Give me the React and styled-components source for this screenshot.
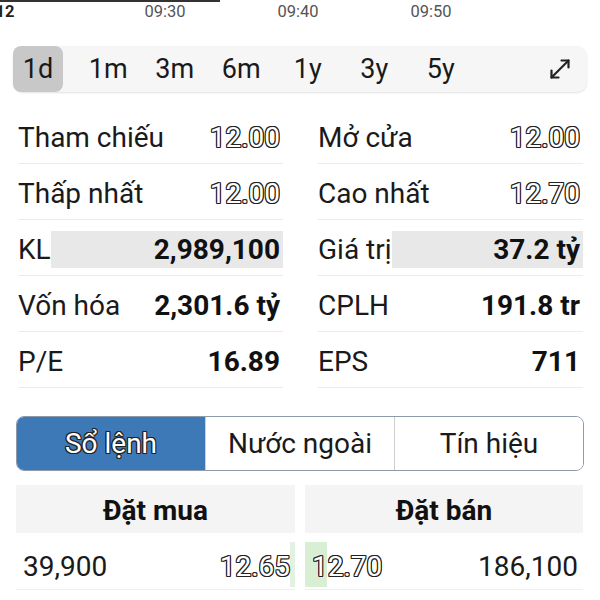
import React from 'react';
import styled, { createGlobalStyle, css } from 'styled-components';

const Global = createGlobalStyle`
  html, body { margin: 0; padding: 0; background: #fff; }
  body {
    font-family: Roboto, "Noto Sans", "Liberation Sans", sans-serif;
    color: #1a1a1a;
    width: 600px;
    height: 600px;
    overflow: hidden;
  }
`;

const outline = css`
  color: #fff;
  text-shadow:
    -1px -1px 0 #222, 1px -1px 0 #222, -1px 1px 0 #222, 1px 1px 0 #222,
    0 -1px 0 #222, 0 1px 0 #222, -1px 0 0 #222, 1px 0 0 #222;
`;

const Page = styled.div`
  width: 600px;
  height: 600px;
  overflow: hidden;
  display: flex;
  flex-direction: column;
`;

const Axis = styled.div`
  position: relative;
  height: 28px;
  flex: none;
  overflow: hidden;
`;

const AxisLine = styled.div`
  position: absolute;
  left: 0;
  top: 0;
  width: 220px;
  height: 2px;
  background: #333;
`;

const Tick = styled.span`
  position: absolute;
  top: 3px;
  left: ${p => p.$x}px;
  transform: translateX(-50%);
  font-size: 16.5px;
  line-height: 18px;
  color: ${p => (p.$bold ? '#222' : '#555')};
  font-weight: ${p => (p.$bold ? 700 : 400)};
`;

const Toolbar = styled.div`
  margin: 18px 13px 0;
  height: 46px;
  flex: none;
  display: flex;
  align-items: stretch;
  background: #f6f6f6;
  border-radius: 10px;
  box-shadow: 0 1px 2px rgba(0, 0, 0, 0.12);
`;

const RangeBtn = styled.button`
  all: unset;
  display: flex;
  align-items: center;
  justify-content: center;
  width: ${p => (p.$active ? '50px' : '66.5px')};
  margin-right: ${p => (p.$active ? '12px' : '0')};
  border-radius: 8px;
  background: ${p => (p.$active ? '#c8c8c8' : 'transparent')};
  font-size: 27px;
  color: #1a1a1a;
`;

const ExpandBtn = styled.button`
  all: unset;
  margin-left: auto;
  margin-right: 15px;
  display: flex;
  align-items: center;
  color: #222;
`;

const Stats = styled.div`
  margin: 16px 17px 0 18px;
  display: grid;
  grid-template-columns: 265px 265px;
  column-gap: 35px;
  flex: none;
`;

const StatRow = styled.div`
  height: 56px;
  box-sizing: border-box;
  padding-top: 3px;
  border-bottom: 1px solid #ececec;
  display: flex;
  align-items: center;
`;

const StatLabel = styled.span`
  font-size: 28px;
  white-space: nowrap;
  color: #1a1a1a;
`;

const StatValue = styled.span`
  flex: 1;
  height: 37px;
  display: flex;
  align-items: center;
  justify-content: flex-end;
  padding-right: 3px;
  font-size: 28px;
  white-space: nowrap;
  background: ${p => (p.$hl ? '#e8e8e8' : 'transparent')};
  font-weight: ${p => (p.$outline ? 400 : 700)};
  color: #111;
  ${p => p.$outline && outline}
`;

const Tabs = styled.div`
  margin: 28px 16px 0;
  height: 55px;
  box-sizing: border-box;
  display: flex;
  border: 1.5px solid #8d9bab;
  border-radius: 8px;
  overflow: hidden;
  flex: none;
`;

const Tab = styled.div`
  flex: 1;
  display: flex;
  align-items: center;
  justify-content: center;
  font-size: 28px;
  background: ${p => (p.$active ? '#3d79b6' : '#fff')};
  color: #1a1a1a;
  & + & { border-left: 1px solid #cfcfcf; }
  ${p => p.$active && outline}
`;

const Book = styled.div`
  margin: 14px 17px 0 16px;
  display: grid;
  grid-template-columns: 279px 278px;
  column-gap: 10px;
  flex: none;
`;

const BookSide = styled.div`
  display: flex;
  flex-direction: column;
`;

const BookHeader = styled.div`
  height: 48px;
  box-sizing: border-box;
  padding-top: 3px;
  background: #f4f4f4;
  display: flex;
  align-items: center;
  justify-content: center;
  font-weight: 700;
  font-size: 28px;
  color: #111;
  margin-bottom: 9px;
`;

const BookRow = styled.div`
  position: relative;
  height: 45px;
  border-bottom: 1px solid #eeeeee;
  display: flex;
  align-items: center;
  justify-content: space-between;
  padding: 2px 5px 0 7px;
`;

const Bar = styled.div`
  position: absolute;
  top: 0;
  bottom: 2px;
  ${p => (p.$side === 'buy' ? 'right: 0;' : 'left: 0;')}
  background: ${p => (p.$side === 'buy' ? '#e3f1e0' : '#d8efd3')};
`;

const Qty = styled.span`
  position: relative;
  font-size: 28px;
  color: #1a1a1a;
`;

const Price = styled.span`
  position: relative;
  font-size: 28px;
  ${outline}
`;

const ExpandIcon = () => (
  <svg width="24" height="24" viewBox="0 0 24 24" fill="none" stroke="currentColor" strokeWidth="2.2" strokeLinecap="round" strokeLinejoin="round">
    <path d="M3.5 20.5 L20.5 3.5" />
    <path d="M13.5 3.5 H20.5 V10.5" />
    <path d="M3.5 13.5 V20.5 H10.5" />
  </svg>
);

const ranges = ['1d', '1m', '3m', '6m', '1y', '3y', '5y'];

const stats = [
  ['Tham chiếu', '12.00', { outline: true }],
  ['Mở cửa', '12.00', { outline: true }],
  ['Thấp nhất', '12.00', { outline: true }],
  ['Cao nhất', '12.70', { outline: true }],
  ['KL', '2,989,100', { hl: true }],
  ['Giá trị', '37.2 tỷ', { hl: true }],
  ['Vốn hóa', '2,301.6 tỷ', {}],
  ['CPLH', '191.8 tr', {}],
  ['P/E', '16.89', {}],
  ['EPS', '711', {}],
];

const buys = [{ qty: '39,900', price: '12.65', bar: 5 }];
const sells = [{ qty: '186,100', price: '12.70', bar: 22 }];

export default function App() {
  return (
    <>
      <Global />
      <Page>
        <Axis>
          <AxisLine />
          <Tick $x={5} $bold>12</Tick>
          <Tick $x={165}>09:30</Tick>
          <Tick $x={298}>09:40</Tick>
          <Tick $x={431}>09:50</Tick>
        </Axis>

        <Toolbar>
          {ranges.map((r, i) => (
            <RangeBtn key={r} $active={i === 0}>{r}</RangeBtn>
          ))}
          <ExpandBtn aria-label="expand"><ExpandIcon /></ExpandBtn>
        </Toolbar>

        <Stats>
          {stats.map(([label, value, o]) => (
            <StatRow key={label}>
              <StatLabel>{label}</StatLabel>
              <StatValue $hl={o.hl} $outline={o.outline}>{value}</StatValue>
            </StatRow>
          ))}
        </Stats>

        <Tabs>
          <Tab $active>Sổ lệnh</Tab>
          <Tab>Nước ngoài</Tab>
          <Tab>Tín hiệu</Tab>
        </Tabs>

        <Book>
          <BookSide>
            <BookHeader>Đặt mua</BookHeader>
            {buys.map(b => (
              <BookRow key={b.price}>
                <Bar $side="buy" style={{ width: b.bar }} />
                <Qty>{b.qty}</Qty>
                <Price>{b.price}</Price>
              </BookRow>
            ))}
          </BookSide>
          <BookSide>
            <BookHeader>Đặt bán</BookHeader>
            {sells.map(s => (
              <BookRow key={s.price}>
                <Bar $side="sell" style={{ width: s.bar }} />
                <Price>{s.price}</Price>
                <Qty>{s.qty}</Qty>
              </BookRow>
            ))}
          </BookSide>
        </Book>
      </Page>
    </>
  );
}
